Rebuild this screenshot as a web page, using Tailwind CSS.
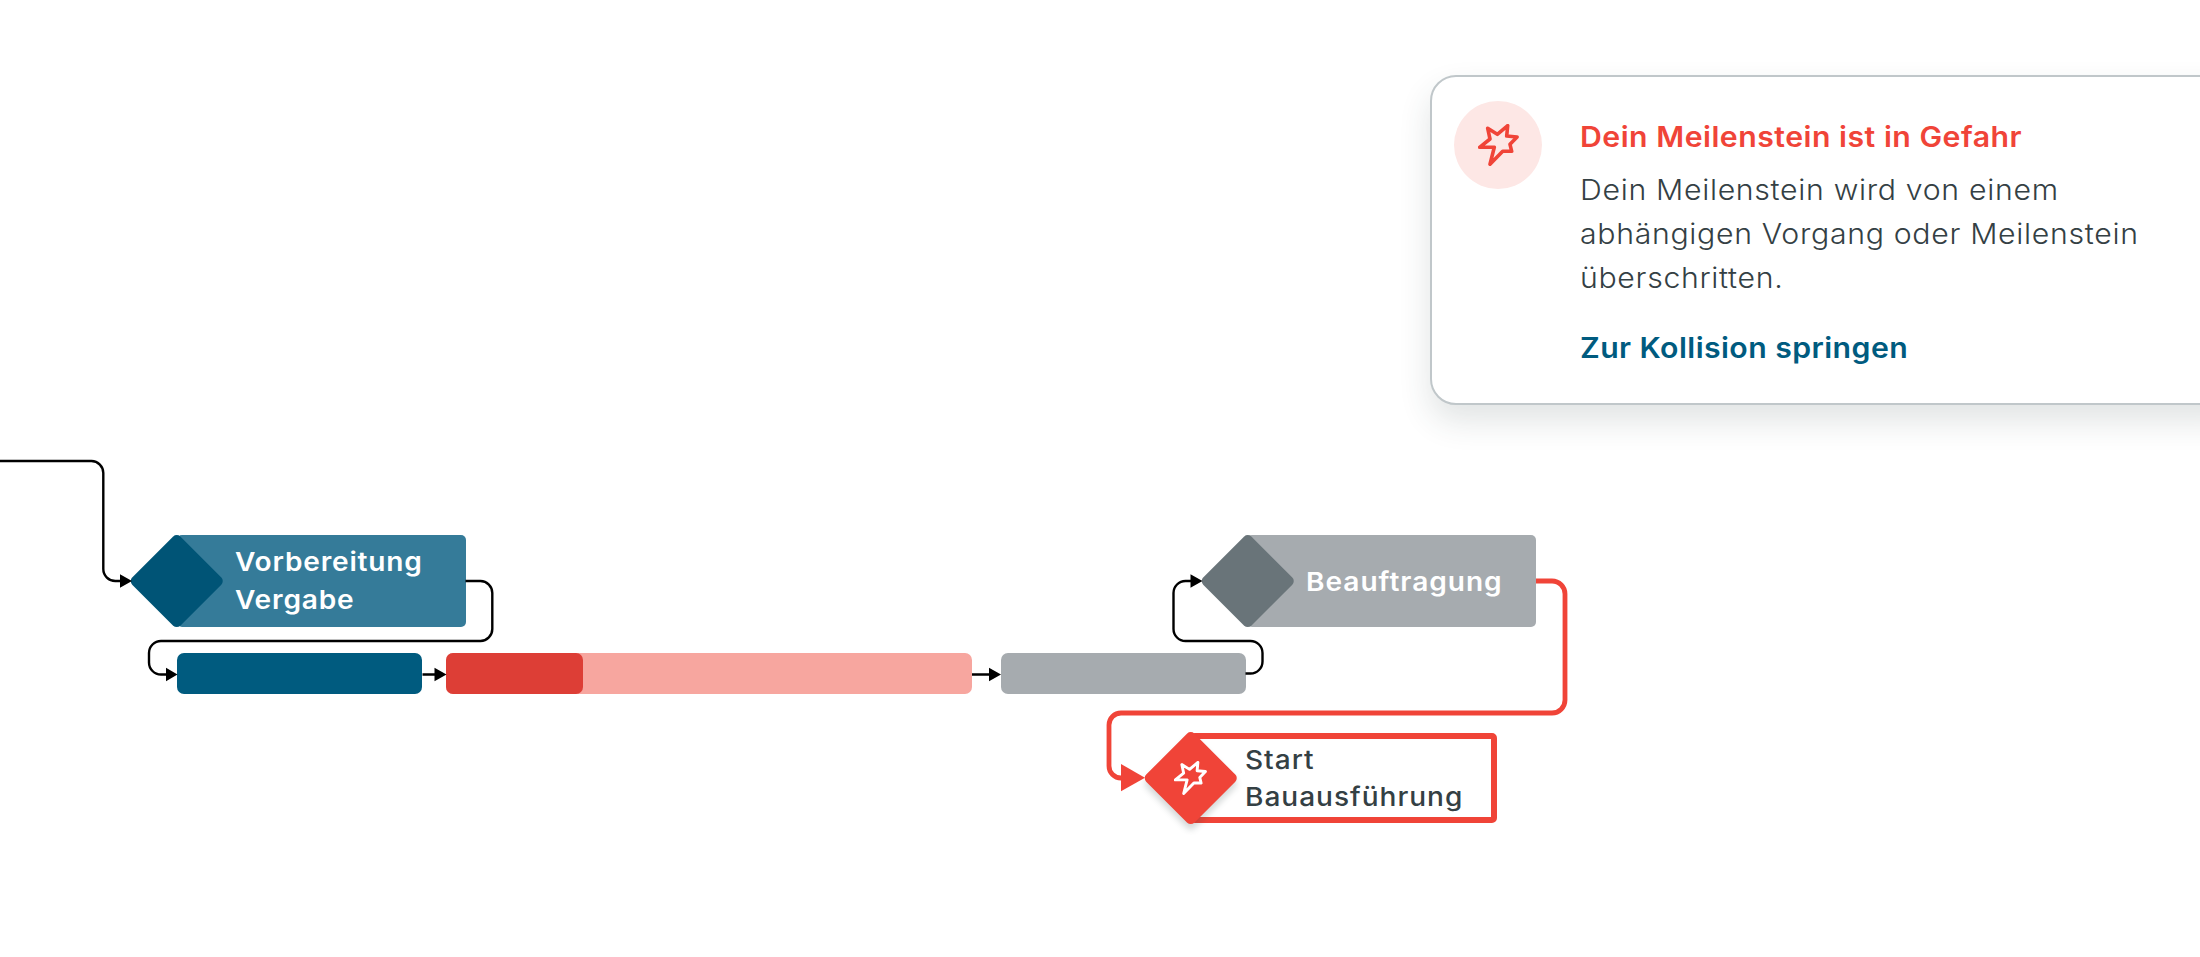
<!DOCTYPE html>
<html lang="de">
<head>
    <meta charset="UTF-8">
    <meta name="viewport" content="width=device-width, initial-scale=1.0">
    <title>Meilensteine</title>
    <script src="https://cdn.jsdelivr.net/npm/@tailwindcss/browser@4"></script>
</head>

<body class="bg-white font-['Inter',sans-serif]">
    <main class="relative w-full h-[957px] overflow-hidden pt-[75px]">

        <!-- warning card, runs out of the window on the right -->
        <section class="flex w-[820px] h-[330px] ml-[1430px] pl-[22px] pt-6 bg-white border-2 border-[#c0c7ca] rounded-[26px] shadow-[0_16px_32px_rgba(45,65,65,0.14)]">
            <div class="flex items-center justify-center shrink-0 size-[88px] rounded-full bg-[#fde7e5]">
                <svg class="w-[41px] h-[42px]" viewBox="0 0 41 42" fill="none" stroke="#f04438" stroke-width="3.6" stroke-linejoin="round">
                    <path d="M9.7 4.3 19.3 10.3 29.7 1.6 28.7 12 39.1 13 32 20.3 33.7 27.3 24.7 27.3 12 40.3 16.3 23.3 1.6 23.3 12 15Z" />
                </svg>
            </div>
            <!-- text is stretched a little for wide letterforms -->
            <div class="ml-[38px] pt-[13px] whitespace-nowrap text-[28px] leading-[44px] origin-left scale-x-[1.08]">
                <h2 class="leading-[46px] font-semibold tracking-[0.46px] text-[#f04438]">Dein Meilenstein ist in Gefahr</h2>
                <p class="mt-2 font-[350] tracking-[0.63px] text-[#344044]">Dein Meilenstein wird von einem<br>abhängigen Vorgang oder Meilenstein<br>überschritten.</p>
                <a href="#" class="block mt-[26px] font-semibold tracking-[0.4px] text-[#005b7f]">Zur Kollision springen</a>
            </div>
        </section>

        <!-- milestones -->
        <div class="absolute left-[177px] top-[535px] w-[288.5px] h-[91.5px] flex items-center pl-[58px] pt-px rounded-[5px] bg-[#357b99] text-white text-[26px] leading-[38px] font-semibold tracking-[0.75px]">
            <div class="absolute left-[-33.7px] top-[12px] size-[67.5px] rotate-45 rounded-[5px] bg-[#005476]"></div>
            <p class="origin-left scale-x-[1.08]">Vorbereitung<br>Vergabe</p>
        </div>
        <div class="absolute left-[1247px] top-[535px] w-[289px] h-[91.5px] flex items-center pl-[59px] pt-[2px] rounded-[5px] bg-[#a6abaf] text-white text-[26px] leading-[38px] font-semibold tracking-[0.9px]">
            <div class="absolute left-[-33.5px] top-[12px] size-[67.5px] rotate-45 rounded-[5px] bg-[#697479]"></div>
            <p class="origin-left scale-x-[1.08]">Beauftragung</p>
        </div>
        <div class="absolute left-[1190px] top-[732.5px] w-[307px] h-[90.5px] flex items-center pl-[49px] rounded-[5px] border-[6px] border-[#f04438] text-[#344044] text-[26px] leading-[37px] font-[450] tracking-[0.9px]">
            <div class="absolute left-[-39.5px] top-[5.5px] size-[67.5px] rotate-45 rounded-[5px] bg-[#f04438] shadow-[4px_4px_6px_rgba(45,65,65,0.2)]"></div>
            <svg class="absolute left-[-22.5px] top-[22px] w-[33px] h-[34px]" viewBox="0 0 41 42" fill="none" stroke="#fff" stroke-width="3.6" stroke-linejoin="round">
                <path d="M9.7 4.3 19.3 10.3 29.7 1.6 28.7 12 39.1 13 32 20.3 33.7 27.3 24.7 27.3 12 40.3 16.3 23.3 1.6 23.3 12 15Z" />
            </svg>
            <p class="origin-left scale-x-[1.08]">Start<br>Bauausführung</p>
        </div>

        <!-- task bars -->
        <div class="absolute left-[177.4px] top-[653px] w-[245px] h-[40.5px] rounded-[7px] bg-[#005b7f]"></div>
        <div class="absolute left-[446.4px] top-[653px] w-[525.5px] h-[40.5px] rounded-[7px] bg-[#f7a69f]">
            <div class="w-[137px] h-full rounded-[7px] bg-[#dd3e36]"></div>
        </div>
        <div class="absolute left-[1001px] top-[653px] w-[244.6px] h-[40.5px] rounded-[7px] bg-[#a6abaf]"></div>

        <!-- connectors -->
        <svg class="absolute left-0 top-0 w-[2200px] h-[957px]" viewBox="0 0 2200 957" fill="none">
            <g stroke="#000" stroke-width="2.4">
                <path d="M0 461H91.5A12 12 0 0 1 103.3 473V569A12 12 0 0 0 115.5 581H122" />
                <path d="M465.5 581H480.5A12 12 0 0 1 492.3 593V629A12 12 0 0 1 480.5 641H161A12 12 0 0 0 149 653V662.5A12 12 0 0 0 161 674.5H168" />
                <path d="M422.5 674.5H436M972 674.5H991" />
                <path d="M1245.5 673.5H1250.5A12 12 0 0 0 1262.5 661.5V653A12 12 0 0 0 1250.5 641H1185.5A12 12 0 0 1 1173.5 629V593A12 12 0 0 1 1185.5 581H1192" />
            </g>
            <path fill="#000" d="M120 574.3 132 581 120 587.7ZM166 667.8 177.5 674.5 166 681.2ZM434.5 667.8 446.5 674.5 434.5 681.2ZM989 667.8 1001 674.5 989 681.2ZM1190.5 574.3 1202.5 581 1190.5 587.7Z" />
            <path stroke="#f04438" stroke-width="4.8" d="M1536 581H1552A13 13 0 0 1 1565 594V700A13 13 0 0 1 1552 713H1121A12 12 0 0 0 1109 725V766A12 12 0 0 0 1121 778H1123" />
            <path fill="#f04438" d="M1121 764 1145 777.7 1121 791.3Z" />
        </svg>
    </main>
</body>
</html>
